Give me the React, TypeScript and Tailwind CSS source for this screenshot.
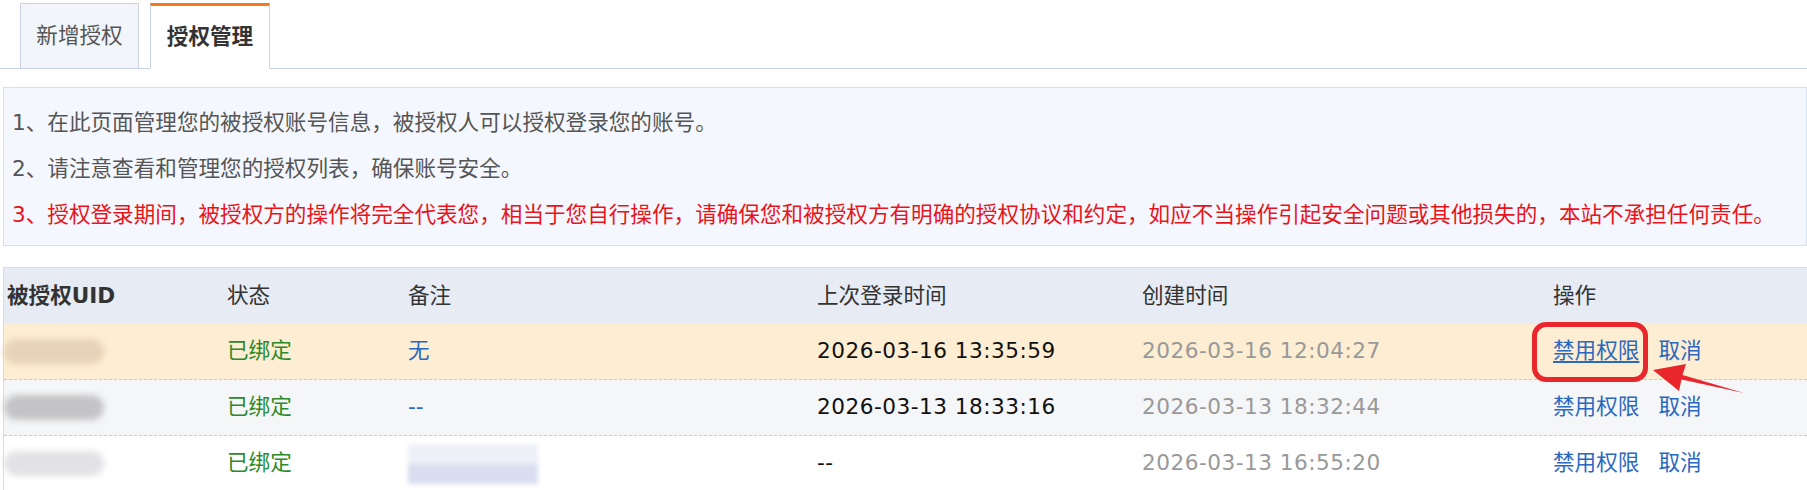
const rows = [
  {
    bg: "bg-[#fdedd2]",
    uid: "bg-[#e6d2b8]",
    remark: "无",
    last: "2026-03-16 13:35:59",
    created: "2026-03-16 12:04:27",
    hover: true,
  },
  {
    bg: "bg-[#f5f6f8]",
    uid: "bg-[#c4c4c6]",
    remark: "--",
    last: "2026-03-13 18:33:16",
    created: "2026-03-13 18:32:44",
    hover: false,
  },
  {
    bg: "bg-white",
    uid: "bg-[#e2e2e4]",
    remark: null,
    last: "--",
    created: "2026-03-13 16:55:20",
    hover: false,
  },
]

const cols = "grid grid-cols-[219px_181px_409px_325px_411px_1fr] items-center"

export default function App() {
  return (
    <div className="relative h-[490px] w-[1807px] overflow-hidden bg-white font-['DejaVu_Sans','Noto_Sans_CJK_SC',sans-serif] text-[21.6px] text-[#333]">
      {/* tabs */}
      <div className="flex h-[69px] items-end gap-[11px] border-b border-[#c6d2e4] pl-[20px]">
        <div className="-mb-px flex h-[66px] w-[119px] items-center justify-center border border-[#c9d3e3] bg-[#f2f5fa] text-[#555]">
          新增授权
        </div>
        <div className="-mb-px flex h-[66px] w-[120px] items-center justify-center border border-t-[3px] border-[#c9d3e3] border-t-[#f07a1e] border-b-white bg-white font-bold text-[#333]">
          授权管理
        </div>
      </div>

      {/* notice */}
      <div className="ml-[3px] mt-[18px] h-[159px] border border-[#d5dfed] bg-[#f4f7fd] pl-[8px] pt-[12px] leading-[46px]">
        <p className="text-[#555]">1、在此页面管理您的被授权账号信息，被授权人可以授权登录您的账号。</p>
        <p className="text-[#555]">2、请注意查看和管理您的授权列表，确保账号安全。</p>
        <p className="text-[#e8141b]">
          3、授权登录期间，被授权方的操作将完全代表您，相当于您自行操作，请确保您和被授权方有明确的授权协议和约定，如应不当操作引起安全问题或其他损失的，本站不承担任何责任。
        </p>
      </div>

      {/* table */}
      <div className="ml-[3px] mt-[21px] border-l border-t border-[#d3dcea]">
        <div className={`${cols} h-[56px] bg-[#e6ebf4] text-[#333]`}>
          <div className="pl-[3px] font-bold">被授权UID</div>
          <div className="pl-[4px]">状态</div>
          <div className="pl-[4px]">备注</div>
          <div className="pl-[4px]">上次登录时间</div>
          <div className="pl-[4px]">创建时间</div>
          <div className="pl-[4px]">操作</div>
        </div>
        {rows.map((r, i) => (
          <div
            key={i}
            className={`${cols} h-[56px] border-b border-dashed border-[#c9c9c9] ${r.bg}`}
          >
            <div>
              <div className={`h-[25px] w-[100px] rounded-full blur-[3px] ${r.uid}`} />
            </div>
            <div className="pl-[4px] text-[#2b8a2b]">已绑定</div>
            <div className="pl-[4px]">
              {r.remark ? (
                <span className="text-[#2b68c0]">{r.remark}</span>
              ) : (
                <div className="flex h-[40px] w-[130px] flex-col blur-[2px]">
                  <div className="flex-1 bg-[#eef0f7]" />
                  <div className="flex-1 bg-[#d9def0]" />
                </div>
              )}
            </div>
            <div className="pl-[4px] tracking-[0.5px] text-[#111]">{r.last}</div>
            <div className="pl-[4px] tracking-[0.5px] text-[#999]">{r.created}</div>
            <div className="flex gap-[19px] pl-[4px] text-[#2b68c0]">
              <span className={r.hover ? "underline underline-offset-[3px]" : ""}>禁用权限</span>
              <span>取消</span>
            </div>
          </div>
        ))}
      </div>

      {/* annotation */}
      <div className="absolute left-[1532px] top-[322px] h-[60px] w-[116px] rounded-[14px] border-[5px] border-[#e8262b]" />
      <svg className="absolute left-[1640px] top-[350px]" width="110" height="50" viewBox="0 0 110 50">
        <polygon
          points="13,20 46,14 42.5,25 104,43 41.5,29.5 39,41"
          fill="#e8262b"
        />
      </svg>
    </div>
  )
}
